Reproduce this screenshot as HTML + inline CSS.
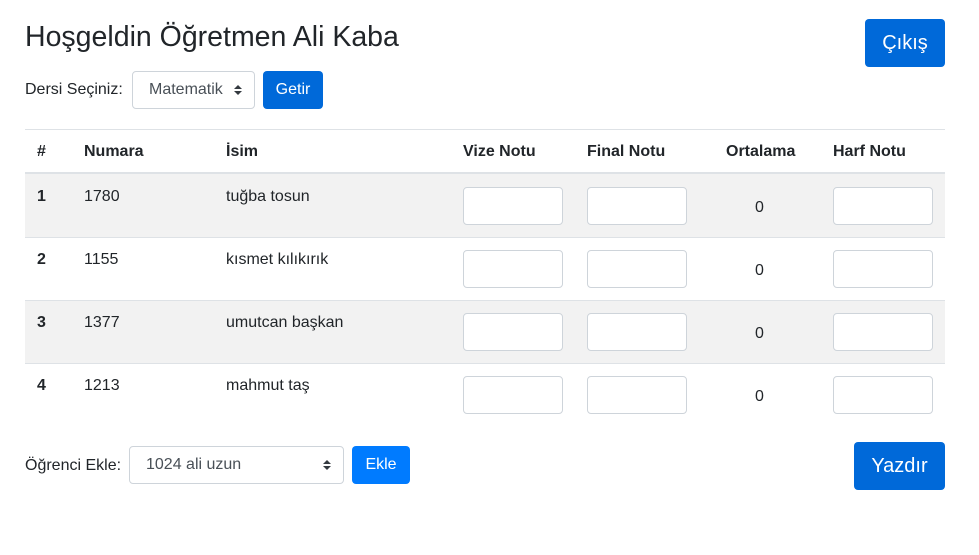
<!DOCTYPE html>
<html><head><meta charset="utf-8"><style>
*{box-sizing:border-box;margin:0;padding:0}
body{width:979px;height:555px;background:#fff;font-family:"Liberation Sans",sans-serif;color:#212529;position:relative;overflow:hidden;font-size:16px}
.a{position:absolute}
h1{position:absolute;left:25px;top:19px;font-size:28.5px;font-weight:400;line-height:36px;white-space:nowrap}
.btn{position:absolute;color:#fff;border-radius:4px;display:flex;align-items:center;justify-content:center}
.sel{position:absolute;border:1px solid #ced4da;border-radius:4px;background:#fff;color:#495057;display:flex;align-items:center}
.arr{position:absolute;right:12px;top:50%;transform:translateY(-50%);width:8px;height:12px}
.inp{position:absolute;width:100px;height:38px;border:1px solid #ced4da;border-radius:4px;background:#fff}
.row{position:absolute;left:25px;width:920px;height:63px;border-top:1px solid #dee2e6}
.t{position:absolute;font-size:16px;line-height:20px;white-space:nowrap}
.b{font-weight:700}
</style></head><body>
<h1>Hoşgeldin Öğretmen Ali Kaba</h1>
<div class="btn" style="left:865px;top:19px;width:80px;height:48px;background:#0069d9;font-size:20px">Çıkış</div>
<div class="t" style="left:25px;top:80px">Dersi Seçiniz:</div>
<div class="sel" style="left:132px;top:71px;width:123px;height:38px;padding-left:16px;font-size:16px">Matematik<svg class="arr" viewBox="0 0 8 12"><path d="M0 5L4 1L8 5Z M0 7L4 11L8 7Z" fill="#343a40"/></svg></div>
<div class="btn" style="left:263px;top:71px;width:60px;height:38px;background:#0069d9;font-size:16px">Getir</div>

<div class="a" style="left:25px;top:129px;width:920px;height:1px;background:#dee2e6"></div>
<div class="a" style="left:25px;top:172px;width:920px;height:2px;background:#dee2e6"></div>
<div class="t b" style="left:37px;top:142px">#</div>
<div class="t b" style="left:84px;top:142px">Numara</div>
<div class="t b" style="left:226px;top:142px">İsim</div>
<div class="t b" style="left:463px;top:142px">Vize Notu</div>
<div class="t b" style="left:587px;top:142px">Final Notu</div>
<div class="t b" style="left:726px;top:142px">Ortalama</div>
<div class="t b" style="left:833px;top:142px">Harf Notu</div>

<div class="row" style="top:174px;border-top:none;background:#f2f2f2"></div>
<div class="row" style="top:237px"></div>
<div class="row" style="top:300px;background:#f2f2f2"></div>
<div class="row" style="top:363px"></div>

<div class="t b" style="left:37px;top:187px">1</div><div class="t" style="left:84px;top:187px">1780</div><div class="t" style="left:226px;top:187px">tuğba tosun</div>
<div class="inp" style="left:463px;top:187px"></div><div class="inp" style="left:587px;top:187px"></div><div class="t" style="left:755px;top:198px">0</div><div class="inp" style="left:833px;top:187px"></div>

<div class="t b" style="left:37px;top:250px">2</div><div class="t" style="left:84px;top:250px">1155</div><div class="t" style="left:226px;top:250px">kısmet kılıkırık</div>
<div class="inp" style="left:463px;top:250px"></div><div class="inp" style="left:587px;top:250px"></div><div class="t" style="left:755px;top:261px">0</div><div class="inp" style="left:833px;top:250px"></div>

<div class="t b" style="left:37px;top:313px">3</div><div class="t" style="left:84px;top:313px">1377</div><div class="t" style="left:226px;top:313px">umutcan başkan</div>
<div class="inp" style="left:463px;top:313px"></div><div class="inp" style="left:587px;top:313px"></div><div class="t" style="left:755px;top:324px">0</div><div class="inp" style="left:833px;top:313px"></div>

<div class="t b" style="left:37px;top:376px">4</div><div class="t" style="left:84px;top:376px">1213</div><div class="t" style="left:226px;top:376px">mahmut taş</div>
<div class="inp" style="left:463px;top:376px"></div><div class="inp" style="left:587px;top:376px"></div><div class="t" style="left:755px;top:387px">0</div><div class="inp" style="left:833px;top:376px"></div>

<div class="t" style="left:25px;top:456px">Öğrenci Ekle:</div>
<div class="sel" style="left:129px;top:446px;width:215px;height:38px;padding-left:16px">1024 ali uzun<svg class="arr" viewBox="0 0 8 12"><path d="M0 5L4 1L8 5Z M0 7L4 11L8 7Z" fill="#343a40"/></svg></div>
<div class="btn" style="left:352px;top:446px;width:58px;height:38px;background:#007bff">Ekle</div>
<div class="btn" style="left:854px;top:442px;width:91px;height:48px;background:#0069d9;font-size:20px">Yazdır</div>
</body></html>
